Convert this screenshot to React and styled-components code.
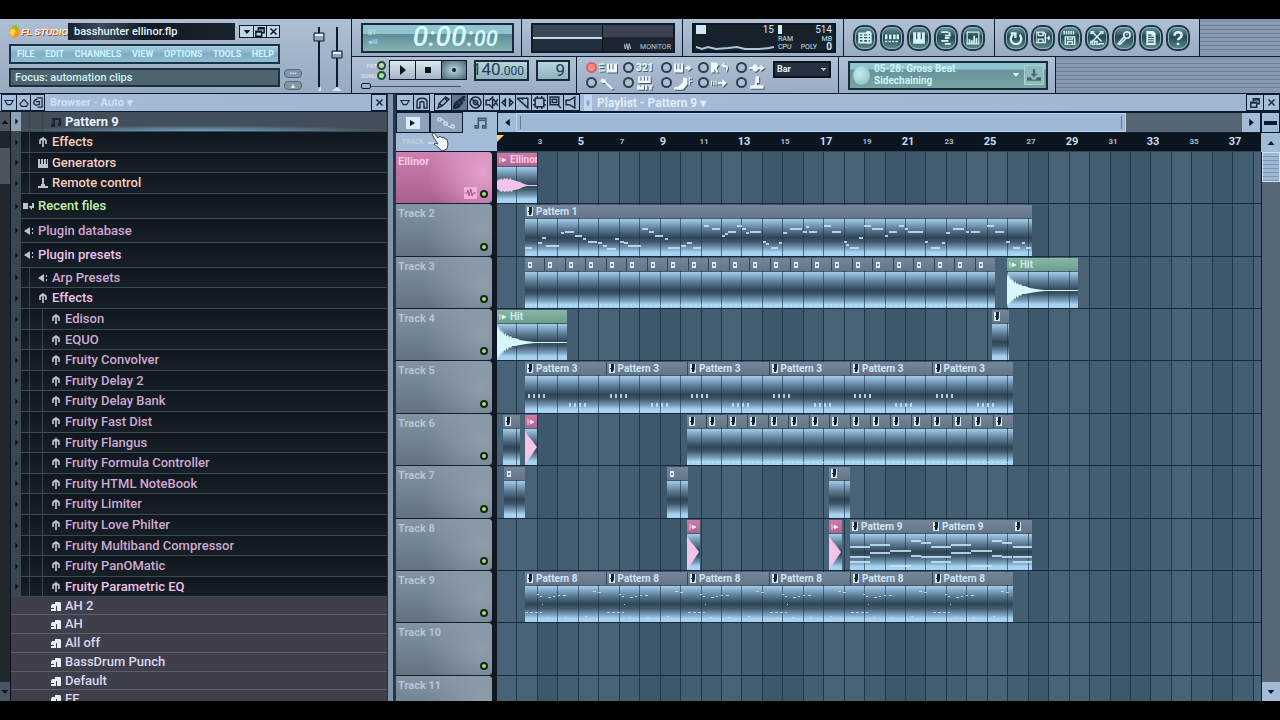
import React from "react";
import styled, { createGlobalStyle, css } from "styled-components";

const GlobalStyle = createGlobalStyle`
  * {
    box-sizing: border-box;
  }
  body {
    margin: 0;
    background: #000;
    font-family: Roboto, "Liberation Sans", sans-serif;
  }
  button, select, input {
    font-family: inherit;
    margin: 0;
    padding: 0;
    border-radius: 0;
  }
  svg {
    flex: none;
  }
`;

const line = "#0c1c30";
const steel = "#a3b5cb";

const StyledScreen = styled.div`
  height: 100vh;
  padding: 19px 0;
  background: #000;
`;
const StyledApp = styled.div`
  height: 100%;
  display: flex;
  flex-direction: column;
  overflow: hidden;
  background: #7d8ea4;
`;

/* ---------- header ---------- */
const StyledHeader = styled.header`
  display: flex;
  flex: none;
  height: 75px;
  border-bottom: 1px solid ${line};
  background: ${steel};
`;
const StyledTitlePanel = styled.div`
  display: flex;
  gap: 4px;
  width: 352px;
  padding: 4px 4px 2px 9px;
  border-right: 1px solid ${line};
  background: linear-gradient(#aebfd3, #97a9c0);
`;
const StyledTitleColumn = styled.div`
  display: flex;
  flex-direction: column;
  gap: 4px;
  width: 271px;
`;
const StyledTitleRow = styled.div`
  display: flex;
  align-items: center;
  height: 17px;
`;
const StyledLogo = styled.div`
  display: flex;
  align-items: center;
  width: 59px;
  height: 17px;
  color: #fff3dc;
  font: italic 700 9px "Liberation Sans", sans-serif;
  text-shadow: 1px 1px 0 #b04a14;
  white-space: nowrap;
`;
const StyledProject = styled.div`
  flex: 1;
  height: 17px;
  padding-left: 6px;
  background: linear-gradient(90deg, #17202b, #3e4b5a 20%, #111a24 45%, #1a232e);
  color: #e2f4fc;
  font-size: 11px;
  font-weight: 500;
  line-height: 17px;
  white-space: nowrap;
`;
const StyledWindowButtons = styled.div`
  display: flex;
  margin-left: 4px;
  border: 1px solid ${line};
`;
const StyledWindowButton = styled.button`
  display: flex;
  align-items: center;
  justify-content: center;
  width: 13px;
  height: 11px;
  border: 0;
  background: #c3d5e6;
  color: ${line};
  & + & {
    border-left: 1px solid ${line};
  }
`;
const StyledMenu = styled.nav`
  display: flex;
  align-items: center;
  justify-content: space-between;
  height: 20px;
  padding: 0 4px 0 6px;
  border: 2px solid #1b3347;
  background: linear-gradient(#a9d0e2, #7fadc6 50%, #8dbdd3);
`;
const StyledMenuItem = styled.button`
  border: 0;
  background: none;
  color: #d0f6fb;
  font-size: 9px;
  font-weight: 700;
  line-height: 16px;
`;
const StyledHint = styled.div`
  height: 19px;
  padding-left: 4px;
  border: 2px solid #1b2f3e;
  background: #4c646e;
  color: #d0eef4;
  font-size: 11px;
  font-weight: 500;
  line-height: 15px;
`;
const StyledKnobs = styled.div`
  display: flex;
  flex-direction: column;
  justify-content: flex-end;
  gap: 3px;
  width: 18px;
  padding-bottom: 1px;
`;
const StyledPill = styled.button`
  height: 9px;
  border: 1px solid #55677b;
  border-radius: 4px;
  background: #8496a9;
  color: #dcebf5;
  font-size: 7px;
  line-height: 6px;
`;
const StyledSliders = styled.div`
  flex: 1;
  display: flex;
  justify-content: center;
  padding-top: 2px;
`;

const StyledPanels = styled.div`
  flex: 1;
  min-width: 0;
`;
const StyledPanelRow = styled.div`
  display: flex;
  height: 37px;
  & + & {
    border-top: 1px solid ${line};
  }
`;
const StyledPanel = styled.div`
  display: flex;
  flex: none;
  align-items: center;
  width: ${({ $width }) => $width}px;
  padding: 0 7px 0 9px;
  border-right: 1px solid ${line};
  background: linear-gradient(#b0c1d5, #9aacc3);
`;
const StyledStripes = styled.div`
  flex: 1;
  border-top: 3px solid #8193aa;
  border-bottom: 3px solid #8496ad;
  background: repeating-linear-gradient(#8899b0 0 3px, #6b7c93 3px 4px);
`;
const StyledLcd = styled.div`
  display: flex;
  align-items: center;
  justify-content: ${({ $end }) => ($end ? "flex-end" : "space-between")};
  flex: ${({ $width }) => ($width ? "none" : 1)};
  width: ${({ $width }) => ($width ? $width + "px" : "auto")};
  height: ${({ $small }) => ($small ? "21px" : "30px")};
  padding: 0 ${({ $small }) => ($small ? "3px" : "14px")} 0 5px;
  border: 2px solid #172b3a;
  background: ${({ $small }) =>
    $small
      ? "linear-gradient(#b5d4de, #8fb2c0)"
      : "linear-gradient(#8fc3cd 0 35%, #5f8d95 36%, #86b4b4)"};
`;
const StyledClock = styled.div`
  color: #d8fbfd;
  font: italic 500 28px Roboto, sans-serif;
  line-height: 26px;
  small {
    font-size: 22px;
  }
`;
const StyledLcdHints = styled.div`
  display: grid;
  color: #b9e8ee;
  font-size: 7px;
  line-height: 9px;
`;
const StyledTempo = styled.div`
  color: #22404e;
  font-size: 17px;
  line-height: 17px;
  small {
    font-size: 12px;
  }
`;
const StyledMonitor = styled.div`
  flex: 1;
  display: grid;
  grid-template-columns: 1fr 1fr;
  height: 30px;
  border: 2px solid #101b27;
  background: #1f2a36;
`;
const StyledScope = styled.div`
  border-right: 1px solid #0a121b;
  background: linear-gradient(#3a4754 0 12px, #c3dbe8 12px 14px, #222e3b 14px);
`;
const StyledScopeLabel = styled.div`
  display: flex;
  align-items: flex-end;
  justify-content: flex-end;
  gap: 8px;
  padding-right: 2px;
  background: linear-gradient(#38434f 0 12px, #1c2530 12px);
  color: #b7ccd8;
  font-size: 7px;
  line-height: 8px;
`;
const StyledCpu = styled.div`
  flex: 1;
  display: grid;
  grid-template-columns: 82px 1fr;
  height: 30px;
  border: 2px solid #0d1720;
  background: #0d1720;
  color: #cfe6f2;
  font-size: 10px;
  line-height: 9px;
  overflow: hidden;
`;
const StyledCpuCell = styled.div`
  padding: 0 2px;
  background: #16212b;
`;
const StyledMeter = styled.div`
  display: flex;
  align-items: flex-start;
  justify-content: space-between;
  height: 10px;
  &::before {
    content: "";
    width: ${({ $width }) => $width}px;
    height: 9px;
    background: #d3e7f3;
  }
`;
const StyledMeterLabels = styled.div`
  display: flex;
  justify-content: space-between;
  font-size: 7px;
  line-height: 8px;
  b {
    font-size: 10px;
  }
`;
const StyledRoundButtons = styled.div`
  display: flex;
  gap: 3px;
`;
const StyledRoundButton = styled.button`
  display: flex;
  align-items: center;
  justify-content: center;
  width: 24px;
  height: 26px;
  border: 2px solid #1f3a44;
  border-radius: 10px;
  outline: 1px solid #8fb3bd;
  outline-offset: -3px;
  background: linear-gradient(#6d98a0, #264850 45%, #5b8a90);
  color: #d5f3f7;
`;
const StyledTransport = styled.div`
  display: grid;
  grid-template-columns: 25px 78px;
  grid-template-rows: 22px 10px;
  column-gap: 3px;
  align-items: center;
`;
const StyledLeds = styled.div`
  display: grid;
  gap: 1px;
  color: #dcecf5;
  font-size: 6px;
  line-height: 9px;
`;
const StyledLedRow = styled.div`
  display: flex;
  align-items: center;
  justify-content: flex-end;
  height: 9px;
`;
const StyledLed = styled.span`
  flex: none;
  width: 9px;
  height: 9px;
  border: 2px solid #2d4840;
  border-radius: 50%;
  background: ${({ $color }) => $color};
`;
const StyledPlayButtons = styled.div`
  display: grid;
  grid-template-columns: repeat(3, 1fr);
  height: 20px;
  border: 1px solid ${line};
`;
const StyledPlayButton = styled.button`
  display: flex;
  align-items: center;
  justify-content: center;
  border: 0;
  background: ${({ $pressed }) =>
    $pressed
      ? "radial-gradient(#b8dce2, #46616e)"
      : "linear-gradient(#dbe6ef, #a5b5c6)"};
  color: ${({ $pressed }) => ($pressed ? "#0f2028" : "#0a121c")};
  & + & {
    border-left: 1px solid ${line};
  }
`;
const StyledShuttle = styled.input`
  grid-column: 1 / -1;
  appearance: none;
  width: 100px;
  height: 9px;
  background: linear-gradient(transparent 4px, #41546a 4px 5px, transparent 5px);
  &::-webkit-slider-thumb {
    appearance: none;
    width: 10px;
    height: 6px;
    border: 1px solid ${line};
    border-radius: 2px;
    background: #9fb3c6;
  }
`;
const StyledCaptioned = styled.div`
  margin-left: 7px;
  padding-bottom: 10px;
`;
const StyledOptions = styled.div`
  display: grid;
  grid-template-columns: 37px 38px 37px 38px 30px;
  grid-template-rows: 15px 15px;
`;
const StyledOption = styled.label`
  display: flex;
  align-items: center;
  gap: 2px;
  color: #eef8fd;
  font-size: 10px;
  font-weight: 900;
  text-shadow: 1px 1px 0 #465a70;
  svg {
    filter: drop-shadow(1px 1px 0 #465a70);
  }
`;
const StyledCheck = styled.input`
  appearance: none;
  flex: none;
  width: 11px;
  height: 11px;
  border: 2px solid #2c4054;
  border-radius: 50%;
  background: #a9c0d2;
  &:checked {
    border-color: #d8646a;
    background: #ff8a84;
  }
`;
const StyledSnap = styled.select`
  appearance: none;
  width: 58px;
  height: 17px;
  padding: 0 2px;
  margin: 0 0 12px auto;
  border: 2px solid #0c141e;
  background: #26323f
    conic-gradient(from -45deg at 50% 100%, #a9bdcc 90deg, transparent 0) right 3px
    center / 6px 3px no-repeat;
  background-image: conic-gradient(from -45deg at 50% 100%, #a9bdcc 90deg, #26323f 0);
  color: #e6f3fa;
  font-size: 9px;
  font-weight: 700;
`;
const StyledNews = styled.div`
  flex: 1;
  display: flex;
  align-items: center;
  gap: 4px;
  height: 29px;
  padding-right: 2px;
  border: 2px solid #172b3a;
  background: linear-gradient(#8fc5cf 0 6px, #6a929c 7px, #76a5a0);
  color: #cdf4f6;
  font-size: 10px;
  font-weight: 700;
  line-height: 12px;
  overflow: hidden;
`;
const StyledNewsText = styled.div`
  flex: 1;
  white-space: nowrap;
`;
const StyledGlobe = styled.div`
  width: 17px;
  height: 19px;
  margin-left: 3px;
  border-radius: 50%;
  background: radial-gradient(circle at 40% 40%, #c4edf0, #86b8c0);
`;
const StyledDownload = styled.button`
  display: flex;
  align-items: center;
  justify-content: center;
  width: 20px;
  height: 20px;
  border: 1px solid #a6d4d4;
  background: #8fbcba;
  color: #47696e;
`;

/* ---------- browser ---------- */
const StyledMain = styled.div`
  flex: 1;
  min-height: 0;
  display: flex;
`;
const StyledBrowser = styled.aside`
  flex: none;
  display: flex;
  flex-direction: column;
  width: 388px;
  border-right: 1px solid #23303d;
`;
const StyledBar = styled.div`
  display: flex;
  flex: none;
  align-items: center;
  height: 18px;
  border-bottom: 1px solid ${line};
  background: linear-gradient(90deg, #a6bcd8, #9fb5d0);
`;
const StyledButtonGroup = styled.div`
  display: flex;
  margin-left: ${({ $gap = 0 }) => $gap}px;
  border: 1px solid ${line};
`;
const StyledToolButton = styled.button`
  display: flex;
  align-items: center;
  justify-content: center;
  width: ${({ $width = 14 }) => $width}px;
  height: 15px;
  border: 0;
  background: ${({ $active }) => ($active ? "#65778b" : "#a8bdd6")};
  color: #1b2c40;
  & + & {
    border-left: 1px solid ${line};
  }
`;
const StyledGrip = styled.span`
  width: 8px;
  height: 16px;
  margin-left: 4px;
  background: radial-gradient(#8aa3c0 1px, #c3d9ef 2px);
`;
const StyledBarTitle = styled.h2`
  flex: 1;
  margin: 0 0 0 5px;
  color: ${({ $large }) => ($large ? "#e0edfa" : "#cfe2f6")};
  font-size: ${({ $large }) => ($large ? "12px" : "11px")};
  font-weight: 700;
  line-height: 16px;
`;
const StyledBrowserBody = styled.div`
  flex: 1;
  min-height: 0;
  display: flex;
  background: #141c24;
`;
const StyledBrowserScroll = styled.div`
  display: flex;
  flex-direction: column;
  justify-content: space-between;
  width: 11px;
  border-right: 1px solid #0a1118;
  background: linear-gradient(#1d262d 36px, #4a5561 36px 72px, #22292e 72px);
`;
const StyledScrollArrow = styled.button`
  display: flex;
  align-items: center;
  justify-content: center;
  height: 19px;
  border: 0;
  background: ${({ $dark }) => ($dark ? "#4a5561" : "#a3bbd6")};
  color: #0b1520;
`;
const StyledList = styled.ul`
  flex: 1;
  margin: 0;
  padding: 0;
  list-style: none;
  overflow: hidden;
`;
const rowKinds = {
  leaf: css`
    height: 21px;
    &:nth-child(5n + 1),
    &:nth-child(5n + 3) {
      height: 20px;
    }
  `,
  folder: css`
    height: 24px;
    &:nth-child(odd) {
      height: 25px;
    }
  `,
  preset: css`
    height: 19px;
    background: #3f3f4c;
    &:nth-child(4n) {
      height: 18px;
    }
  `,
};
const StyledRow = styled.li`
  display: flex;
  align-items: stretch;
  border-bottom: 1px solid ${({ $kind }) => ($kind === "preset" ? "#5d5d6b" : "#3d4953")};
  background: ${({ $selected }) =>
    $selected
      ? "radial-gradient(ellipse 50% 30% at 50% 100%, #6fa5c8, transparent), #424e59"
      : "linear-gradient(#10171e, #161f27)"};
  ${({ $kind }) => rowKinds[$kind]}
`;
const StyledRowArrow = styled.span`
  display: flex;
  align-items: center;
  justify-content: center;
  width: 10px;
  margin-right: ${({ $indent }) => $indent}px;
  background: ${({ $bare, $selected }) =>
    $bare ? "none" : $selected ? "#8fa3b4" : "#3a4751"};
  color: #0a1118;
`;
const StyledRowLink = styled.a`
  display: flex;
  align-items: center;
  gap: 3px;
  color: ${({ $color }) => $color};
  font-size: 13px;
  font-weight: ${({ $strong }) => ($strong ? 700 : 500)};
  line-height: 18px;
  text-decoration: none;
  white-space: nowrap;
  svg {
    color: ${({ $strong }) => ($strong ? "#1b252e" : "#b9c4cc")};
  }
`;
const StyledGuide = styled.span`
  width: ${({ $width }) => $width}px;
  border-left: 1px solid #3f464b;
`;

/* ---------- playlist ---------- */
const StyledPlaylist = styled.section`
  flex: 1;
  min-width: 0;
  display: flex;
  flex-direction: column;
  margin-left: 5px;
  border-left: 3px solid #26384a;
  box-shadow: -5px 0 0 #8093a9;
`;
const StyledPlaylistBody = styled.div`
  flex: 1;
  min-height: 0;
  display: grid;
  grid-template-columns: 101px 1fr 19px;
  grid-template-rows: 21px 19px 1fr;
  background: #a3bbd6;
`;
const StyledTabs = styled.div`
  display: grid;
  grid-template-columns: repeat(3, 1fr);
  background: #a3bbd6;
`;
const StyledTab = styled.button`
  display: flex;
  align-items: center;
  justify-content: center;
  border: ${({ $active }) => ($active ? "0" : `1px solid ${line}`)};
  background: ${({ $active }) => ($active ? "#a3bbd6" : "#8ea1b9")};
  color: #e4f1fb;
`;
const StyledHScroll = styled.div`
  display: flex;
  border: 1px solid ${line};
  background: #566574;
`;
const StyledHArrow = styled.button`
  width: 18px;
  border: 0;
  background: #a3bbd6;
  color: #0b1520;
`;
const StyledHTrack = styled.div`
  flex: 1;
`;
const StyledHThumb = styled.div`
  width: 84%;
  height: 100%;
  padding: 2px 3px;
  border: 1px solid #bdd2e8;
  background: #9fb8d6;
  &::before {
    content: "";
    display: block;
    height: 100%;
    border: solid #617791;
    border-width: 0 1px;
  }
`;
const StyledZoom = styled.button`
  border: 1px solid ${line};
  background: #a3bbd6;
  &::before {
    content: "";
    display: block;
    height: 4px;
    margin: 0 2px;
    background: #0b1c2c;
  }
`;
const StyledTrackTools = styled.div`
  display: flex;
  gap: 4px;
  padding: 6px;
  border-bottom: 1px solid ${line};
  color: #c7dcea;
  font-size: 7px;
  line-height: 6px;
`;
const StyledRuler = styled.div`
  position: relative;
  border-bottom: 1px solid #31475a;
  background: #0b151f;
  overflow: hidden;
`;
const StyledBarNumber = styled.span`
  position: absolute;
  top: 1px;
  width: 26px;
  color: ${({ $small }) => ($small ? "#a9bdca" : "#c9dfee")};
  font-size: ${({ $small }) => ($small ? "8px" : "11px")};
  font-weight: 700;
  line-height: 16px;
  text-align: center;
`;
const StyledMarker = styled.span`
  position: absolute;
  top: 2px;
  left: 0;
  border: solid transparent;
  border-width: 7px 7px 0 0;
  border-top-color: #ffcf66;
`;
const StyledVScroll = styled.div`
  display: flex;
  flex-direction: column;
  border-left: 1px solid ${line};
  background: #586878;
`;
const StyledVThumb = styled.div`
  flex: none;
  height: 30px;
  border: 1px solid #cfe0f2;
  background: repeating-linear-gradient(#9db7d5 0 3px, #7d95b2 3px 4px);
`;
const StyledFill = styled.div`
  flex: 1;
`;

const rowHeight = css`
  flex: none;
  height: 52px;
  &:nth-child(5n + 2),
  &:nth-child(5n) {
    height: 53px;
  }
`;
const StyledTrackHeaders = styled.div`
  overflow: hidden;
  border-right: 5px solid #101923;
  background: #101923;
`;
const StyledTrackHeader = styled.div`
  ${rowHeight}
  display: flex;
  justify-content: space-between;
  padding: 2px 3px 4px 2px;
  border-bottom: 1px solid #15202c;
  border-radius: 0 4px 4px 0;
  background: ${({ $pink }) =>
    $pink
      ? "radial-gradient(circle at 90% 40%, #e3a0cd, transparent 60%), linear-gradient(#cf7fb0, #a8608f)"
      : "radial-gradient(circle at 90% 50%, #8f9dab, transparent 65%), linear-gradient(#8494a4, #63727e)"};
  color: ${({ $pink }) => ($pink ? "#f8c9e6" : "#b3c6d6")};
  font-size: 11px;
  font-weight: 700;
  line-height: 15px;
`;
const StyledTrackButtons = styled.div`
  display: flex;
  align-items: flex-end;
  gap: 3px;
`;
const StyledMute = styled.button`
  width: 8px;
  height: 8px;
  margin: 0 1px 1px 0;
  border: 2px solid #16241a;
  border-radius: 50%;
  background: #a8e070;
`;
const StyledWaveBadge = styled.span`
  display: flex;
  align-items: center;
  width: 13px;
  height: 12px;
  background: #f0b0d8;
`;
const StyledCanvas = styled.div`
  position: relative;
  overflow: hidden;
  background: #435c70;
`;
const StyledColumnBand = styled.div`
  position: absolute;
  top: 0;
  bottom: 0;
  border-right: 1px solid #20374b;
  background: ${({ $tone }) => ["#486376", "#435e71", "#3e586b"][$tone]};
`;
const StyledLane = styled.div`
  ${rowHeight}
  position: relative;
  border-bottom: 1px solid #152a3d;
`;
const StyledClip = styled.article`
  position: absolute;
  top: 1px;
  bottom: 0;
  display: flex;
  flex-direction: column;
  gap: 1px;
`;
const clipColors = {
  pattern: "linear-gradient(#76869a, #657487)",
  pink: "linear-gradient(#d079a8, #b0638e)",
  green: "linear-gradient(#86b8a4, #6b9f8c)",
};
const StyledClipTitles = styled.div`
  display: flex;
  height: 13px;
  background: ${({ $tone }) => clipColors[$tone]};
`;
const StyledClipTitle = styled.span`
  flex: 1;
  display: flex;
  align-items: center;
  gap: 3px;
  min-width: 0;
  padding-left: 2px;
  overflow: hidden;
  color: ${({ $tone }) => ($tone === "pink" ? "#ffc9e6" : "#cfe6f6")};
  font-size: 10px;
  font-weight: 700;
  line-height: 13px;
  white-space: nowrap;
  & + & {
    border-left: 1px solid #33465a;
  }
`;
const StyledClipBody = styled.div`
  position: relative;
  flex: 1;
  overflow: hidden;
  background: linear-gradient(
    #a4cce8,
    #7ea3c0 14%,
    #5b7a91 28%,
    #2f4557 50%,
    #3f596c 62%,
    #7ba1bd 80%,
    #a6d3f2 90%
  );
  svg {
    position: absolute;
    inset: 0;
  }
`;
const StyledCursor = styled.div`
  position: absolute;
  top: 132px;
  left: 430px;
`;

/* ---------- small drawings ---------- */
const Icon = ({ size = 12, children, fill = "none", view = 12 }) => (
  <svg
    width={size}
    height={size}
    viewBox={`0 0 ${view} ${view}`}
    fill={fill}
    stroke={fill === "none" ? "currentColor" : "none"}
    strokeWidth="1.4"
    aria-hidden="true"
  >
    {children}
  </svg>
);
const Solid = (props) => <Icon fill="currentColor" {...props} />;

const Fruit = () => (
  <svg width="12" height="17" viewBox="0 0 13 17" aria-hidden="true">
    <path d="M1 5C4 3 9 4 12 7c0 5-4 9-7 9C1 14 0 9 1 5z" fill="#ff9416" />
    <path d="M2 6c2-1 4 0 5 2-1 3-2 5-3 6C1 12 1 8 2 6z" fill="#ffd84a" />
    <path d="M4 5L3 1l3 2 2-3 1 4 3 0-3 2z" fill="#7cc63a" />
  </svg>
);
const Down = () => <Solid size={8}><path d="M1 3h10L6 9z" /></Solid>;
const Up = () => <Solid size={8}><path d="M1 9h10L6 3z" /></Solid>;
const Right = () => <Solid size={7}><path d="M4 1v10l5-5z" /></Solid>;
const Restore = () => (
  <Icon size={10}>
    <path d="M4 4V1h7v6H8M4 2h7M1 5h7v6H1zM1 6h7" strokeWidth="1.8" />
  </Icon>
);
const Close = () => (
  <Icon size={9}><path d="M2 2l8 8M10 2l-8 8" strokeWidth="2" /></Icon>
);

const roundIcons = {
  Playlist: (
    <>
      <path d="M1 2h10v8H1z" fill="none" />
      <path d="M1 4.500h10M1 7h10M4.500 2v8M8.500 0v11M7 1h4" />
    </>
  ),
  "Step sequencer": (
    <>
      <path d="M1 3v4M4.500 3v4M8 3v4M11 3v4" strokeWidth="2.200" />
      <path d="M0 9h12" strokeDasharray="2 1" />
    </>
  ),
  "Piano roll": (
    <path d="M1 1h2.500v6h1V1h3v6h1V1H11v10H1z" fill="currentColor" strokeWidth="0" />
  ),
  Browser: <path d="M2 1h6M5 4h5M5 6h4M2 8.500h6M5 11h5M9 1v3" strokeWidth="1.600" />,
  Mixer: (
    <>
      <path d="M1 11V1h10v10z" strokeWidth="1" />
      <path d="M3 11V7M5 11V8M7 11V4M9 11V6" strokeWidth="1.500" />
    </>
  ),
  Undo: <path d="M3.500 3A4.500 4.500 0 1 0 9 3.300M1.500 2h4v4" strokeWidth="2" />,
  "Save new": (
    <path d="M0 1h6.500L8 2.500V10H0zM2 1v3h4V1M2 10V7h4v3M9 6h4M11 4v4" strokeWidth="1.200" />
  ),
  "Render wave": (
    <path d="M1 0v3M3 0v3M5 0v3M7 0v3M9 0v3M2 5h8v7H2zM4 5v2h4V5M4 12V9h4v3" strokeWidth="1.200" />
  ),
  "Edit wave": (
    <path d="M3 2l7 7M9 2L2 9M1 0h2v2H1zM9 0h2v2H9zM0 12V9h2v3h2V9h2v3h2v-1h4" strokeWidth="1.300" />
  ),
  Record: (
    <>
      <circle cx="8.500" cy="3.500" r="2.700" />
      <path d="M6 5l-5 6 1.500.5L7.500 6.500M8 3h1" />
    </>
  ),
  "Project info": (
    <>
      <path d="M2 0h6l2 2v10H2z" fill="currentColor" strokeWidth="0" />
      <path d="M3.500 3.500h3M3.500 5.500h5M3.500 7.500h5M3.500 9.500h5" stroke="#2c4e56" strokeWidth="1" />
    </>
  ),
  Help: <path d="M3 4c0-4 7-4 6 0C9 6 6 6 6 8M6 10v2" strokeWidth="2.200" />,
};
const viewButtons = ["Playlist", "Step sequencer", "Piano roll", "Browser", "Mixer"];
const fileButtons = [
  "Undo",
  "Save new",
  "Render wave",
  "Edit wave",
  "Record",
  "Project info",
  "Help",
];

const optionIcons = [
  ["Typing keyboard", <path d="M0 2h5v1H0zM0 5h4v1H0zM0 8h5v1H0zM7 2h2v5h1V2h2v5h1V2h3v8H7z" />],
  ["Countdown", null],
  ["Blend notes", <path d="M0 2h2v5h1V2h2v5h1V2h2v8H0zM10 5h2V3l4 3-4 3V7h-2z" />],
  ["Loop record", <path d="M0 1h5l2 2-2 3 2 4H5L3 7v3H0zM9 3l3-2v2c4 0 4 4 1 7 1-4 0-5-1-5v2z" />],
  ["Multilink", <path d="M0 5h3c1-3 4-3 5 0h2V3l4 3-4 3V7H8c-1 3-4 3-5 0H0z" />],
  ["Metronome", <path d="M2 2l4 1 1 2 6 6-2 1-6-6H3L0 4l2 0z" />],
  ["Wait for input", <path d="M2 0h2v4h1V0h2v4h1V0h2v4h1V0h2v6H2zM1 8h2l1 2 1-2h2v4H1zM8 8h2v4H8zM11 8h4v1h-1v3h-2V9h-1z" />],
  ["Step edit", <path d="M0 10l4-1 4-4V1l4 1v5l-4 5H0zM13 1h3v1h-2v2h2v1h-2v3h-1z" />],
  ["Auto scroll", <path d="M0 4h1v4H0zM2 4h1v4H2zM4 4h1v4H4zM6 5h4V2l4 4-4 4V7H6z" />],
  ["Joystick", <path d="M6 0h3v6H7v2h6v3H1V8h4z" />],
];

const toolButtons = [
  ["Draw", <path d="M1 11l1-4 6-6 3 2-6 6zM2 7l3 2M7 2l3 3" />],
  ["Paint", <path d="M11 0L7 4l1 2-3 4-4 1 1-4 4-3zM3 7l3 2M8 2l3 2" strokeWidth="2.500" />],
  ["Delete", <path d="M6 1a5 5 0 1 0 .1 0zM6 4a2 2 0 1 0 .1 0zM3 3l6 6" />],
  ["Mute", <path d="M1 4h3l3-3v10L4 8H1zM8 3l4 6M12 3L8 9" />],
  ["Slip", <path d="M4 3L1 6l3 3zM8 3l3 3-3 3z" />],
  ["Slice", <path d="M0 2h10v9zM5 2v2" />],
  ["Select", <path d="M2 2h8v8H2zM0 4h2M0 8h2M10 4h2M10 8h2M4 0v2M8 0v2M4 10v2M8 10v2" />],
  ["Zoom", <path d="M1 1h8v7H1zM8 8l3 3M3 3h4v3H3z" />],
  ["Playback", <path d="M1 4h3l5-3v10L4 8H1z" />],
];

const rowIcons = {
  note: <path d="M2 2h9v8H8V7h1V4H5v7H1V8h2z" />,
  plug: (
    <path
      d="M6 2v9M3 8V5c0-3 6-3 6 0v3M4 4l2-2 2 2"
      fill="none"
      stroke="currentColor"
      strokeWidth="1.700"
    />
  ),
  speaker: <path d="M1 6l6-4v8zM9 3h1v2H9zM9 7h1v2H9z" />,
  preset: (
    <path d="M1 6l1-2h3V2h5l1 1v8H7V6H6v5H1V9h3V8H1z" fill="#e4eef4" />
  ),
  keys: <path d="M1 2h2v5h1V2h2v5h1V2h2v5h1V2h1v9H1z" />,
  stick: <path d="M5 1h2v6h1v2h3v2H1V9h3V7h1z" />,
  recent: <path d="M0 3h5v6H0zM6 6h3V3h2v5H9v2L6 7z" />,
};

const salmon = "#f8cdbb";
const plum = "#d3a3d8";
const pink = "#eec0ee";
const mauve = "#cfa9d2";
const lilac = "#dad6ee";

const browserRows = [
  ["Pattern 9", "note", "leaf", 2, "#e6f2fc"],
  ["Effects", "plug", "leaf", 1, salmon],
  ["Generators", "keys", "leaf", 1, salmon],
  ["Remote control", "stick", "leaf", 1, salmon],
  ["Recent files", "recent", "folder", 0, "#c2f2a8"],
  ["Plugin database", "speaker", "folder", 0, plum],
  ["Plugin presets", "speaker", "folder", 0, pink],
  ["Arp Presets", "speaker", "leaf", 1, mauve],
  ["Effects", "plug", "leaf", 1, pink],
  ...[
    "Edison",
    "EQUO",
    "Fruity Convolver",
    "Fruity Delay 2",
    "Fruity Delay Bank",
    "Fruity Fast Dist",
    "Fruity Flangus",
    "Fruity Formula Controller",
    "Fruity HTML NoteBook",
    "Fruity Limiter",
    "Fruity Love Philter",
    "Fruity Multiband Compressor",
    "Fruity PanOMatic",
  ].map((name) => [name, "plug", "leaf", 2, mauve]),
  ["Fruity Parametric EQ", "plug", "leaf", 2, pink],
  ...["AH 2", "AH", "All off", "BassDrum Punch", "Default", "EE"].map((name) => [
    name,
    "preset",
    "preset",
    2,
    lilac,
  ]),
];

/* ---------- song data: start and length in px of the song canvas ---------- */
const barX = (bar) => Math.round((bar * 409) / 20);
const times = (count, value) => Array.from({ length: count }, () => value);

// x, length, y
const melody = [
  [0, 7, 28], [13, 4, 23], [17, 4, 18], [21, 13, 26], [36, 3, 13], [40, 9, 12],
  [50, 7, 16], [58, 3, 19], [63, 9, 22], [73, 4, 23], [78, 4, 26], [82, 9, 29],
  [90, 4, 19], [95, 4, 22], [99, 4, 23], [103, 13, 26], [117, 6, 9], [124, 5, 12],
  [130, 8, 16], [140, 3, 19], [143, 12, 28], [156, 5, 26], [162, 5, 23],
  [168, 8, 28], [179, 5, 6], [187, 8, 9], [197, 3, 16], [200, 3, 14], [203, 8, 12],
  [212, 5, 6], [217, 4, 9], [221, 3, 13], [225, 11, 12], [238, 3, 22], [241, 3, 24],
  [246, 7, 28], [254, 3, 23], [258, 4, 13], [265, 12, 9], [278, 4, 12], [281, 3, 7],
  [284, 8, 12], [299, 7, 6], [307, 9, 12], [319, 3, 22], [321, 3, 25], [325, 9, 28],
  [334, 4, 18], [339, 7, 6], [347, 11, 9], [360, 3, 16], [364, 8, 12], [374, 5, 6],
  [380, 3, 9], [383, 15, 12], [400, 3, 22], [406, 9, 28], [417, 3, 23], [421, 4, 13],
  [428, 11, 9], [441, 3, 12], [446, 9, 12], [462, 7, 6], [470, 9, 12], [481, 4, 22],
  [488, 7, 28], [497, 3, 23], [501, 5, 28],
];
const every = (step, count, notes) =>
  times(count, 0).flatMap((_, i) =>
    notes.map(([x, w, y, h]) => [x + Math.round(i * step), w, y, h])
  );
const stabs = every(81.5, 6, [
  [3, 2, 18, 4], [8, 2, 18, 4], [13, 2, 18, 4], [18, 2, 18, 4],
  [44, 2, 27, 4], [49, 2, 27, 4], [54, 2, 27, 4], [59, 2, 27, 4],
]);
const sparkle = every(81.5, 6, [
  [0, 3, 26, 1], [5, 3, 26, 1], [10, 3, 26, 1], [15, 2, 26, 1], [12, 2, 8, 1],
  [15, 2, 10, 1], [17, 1, 18, 1], [23, 3, 11, 1], [28, 2, 10, 1], [33, 2, 9, 1],
  [38, 3, 9, 1], [68, 3, 5, 1], [73, 3, 6, 1], [22, 2, 31, 1], [40, 2, 31, 1],
  [60, 2, 30, 1],
]);
const chord = [[0, 20, 12], [0, 20, 22], [0, 20, 27]];
const chords = [
  ...chord,
  [20, 20, 10], [20, 20, 18], [40, 21, 16], [61, 10, 6], [61, 10, 21],
  [71, 10, 8], [71, 10, 22], [40, 21, 31],
];

const tracks = [
  { name: "Ellinor", pink: true, clips: [
    { x: 0, w: 40, tone: "pink", names: ["Ellinor"], shape: "voice" },
  ] },
  { name: "Track 2", clips: [{ x: 28, w: 507, names: ["Pattern 1"], notes: melody }] },
  { name: "Track 3", clips: [
    { x: 28, w: 470, names: times(23, ""), icon: "step", ticks: true },
    { x: 510, w: 71, tone: "green", names: ["Hit"], shape: "hit" },
  ] },
  { name: "Track 4", clips: [
    { x: 0, w: 70, tone: "green", names: ["Hit"], shape: "hit" },
    { x: 495, w: 17, names: [""] },
  ] },
  { name: "Track 5", clips: [{ x: 28, w: 488, names: times(6, "Pattern 3"), notes: stabs }] },
  { name: "Track 6", clips: [
    { x: 6, w: 17, names: [""] },
    { x: 28, w: 12, tone: "pink", names: [""], shape: "fade" },
    { x: 190, w: 326, names: times(16, ""), ticks: true },
  ] },
  { name: "Track 7", clips: [
    { x: 7, w: 21, names: [""], icon: "step" },
    { x: 170, w: 21, names: [""], icon: "step" },
    { x: 332, w: 21, names: [""] },
  ] },
  { name: "Track 8", clips: [
    { x: 190, w: 13, tone: "pink", names: [""], shape: "fade" },
    { x: 332, w: 13, tone: "pink", names: [""], shape: "fade" },
    { x: 353, w: 81, names: ["Pattern 9"], notes: chords },
    { x: 434, w: 82, names: ["Pattern 9"], notes: chords },
    { x: 516, w: 19, names: [""], notes: chord },
  ] },
  { name: "Track 9", clips: [{ x: 28, w: 488, names: times(6, "Pattern 8"), notes: sparkle }] },
  { name: "Track 10", clips: [] },
  { name: "Track 11", clips: [] },
];
const tones = [0, 0, 2, 1, 0, 0, 1, 2, 2, 1, 1, 0, 1, 2, 2, 1, 0, 0, 1, 2, 2, 1, 1, 0, 0, 1, 2, 0, 0, 1, 2, 2, 1, 0, 1, 2, 1, 0];

const shapes = {
  voice: "M0 14l2-2 1 1 1-2 2 2 1-2 2 1 1-1 2 2 1-2 2 2 2 0 2 1 4 1 4 2 4 1h10v1H30l-4 1-4 2-4 1-2 0-1 2-2-1-2 1-1-1-2 1-2-1-2 1-2-2-2-1z",
  hit: "M0 1l1 4 1-3 1 6 1-3 1 4 1-2 1 4 2-2 0 3 2-1 1 2 2-1 1 2 3 0 5 2 6 1 8 1h34v1H38l-9 1-6 1-5 1-3 0-1 2-2-1-1 3-2-2 0 3-2-1-1 4-1-3-1 5-1-3-1 5-1-3-1 5z",
  fade: "M0 2l4 6 2 2 6 8-6 9-2 3-4 6z",
};

const ClipIcon = ({ tone, icon }) => {
  if (tone !== "pattern") {
    return (
      <svg width="8" height="8" viewBox="0 0 8 8" aria-hidden="true">
        <path
          d="M1 1v6M2 4h5M3 2l4 2-4 2"
          fill="#fff"
          stroke={tone === "pink" ? "#ffd3ea" : "#d5f5e6"}
        />
      </svg>
    );
  }
  return icon === "step" ? (
    <svg width="6" height="8" viewBox="0 0 6 8" aria-hidden="true">
      <path d="M1 1h4v6H1z" fill="#dceaf5" />
      <path d="M2 3h2v2H2z" fill="#6d7f92" />
    </svg>
  ) : (
    <svg width="6" height="9" viewBox="0 0 6 9" aria-hidden="true">
      <path d="M0 0h6v9H0z" fill="#d5e8f6" />
      <path d="M1 0h4v5l-1 3H2V5H1z" fill="#13202e" />
      <path d="M1 0h1v4H1z" fill="#d5e8f6" />
    </svg>
  );
};

const Clip = ({ x, w, tone = "pattern", names, icon, notes = [], shape, ticks }) => (
  <StyledClip style={{ left: x, width: w }}>
    <StyledClipTitles $tone={tone}>
      {names.map((name, i) => (
        <StyledClipTitle key={i} $tone={tone}>
          <ClipIcon tone={tone} icon={icon} />
          {name}
        </StyledClipTitle>
      ))}
    </StyledClipTitles>
    <StyledClipBody>
      <svg width={w} height="37" aria-hidden="true">
        {tones.map((_, i) => (
          <path key={i} d={`M${barX(i) - x - 1}.5 0v37`} stroke="#1c3348" opacity="0.6" />
        ))}
        {ticks && (
          <path d={`M0 33.500h${w}`} stroke="#d8effc" strokeDasharray="2 3" opacity="0.6" />
        )}
        {notes.map(([nx, nw, ny, nh = 2], i) => (
          <rect key={i} x={nx} y={ny} width={nw} height={nh} fill="#c4e4f6" opacity="0.85" />
        ))}
        {shape && <path d={shapes[shape]} fill={tone === "pink" ? "#f2c4ea" : "#d9f6fb"} />}
      </svg>
    </StyledClipBody>
  </StyledClip>
);

const RoundButtons = ({ names }) => (
  <StyledRoundButtons>
    {names.map((name) => (
      <StyledRoundButton key={name} aria-label={name}>
        <Icon size={14}>{roundIcons[name]}</Icon>
      </StyledRoundButton>
    ))}
  </StyledRoundButtons>
);

const Header = () => (
  <StyledHeader>
    <StyledTitlePanel>
      <StyledTitleColumn>
        <StyledTitleRow>
          <StyledLogo>
            <Fruit />
            FL STUDIO
          </StyledLogo>
          <StyledProject>basshunter ellinor.flp</StyledProject>
          <StyledWindowButtons>
            <StyledWindowButton aria-label="Minimize"><Down /></StyledWindowButton>
            <StyledWindowButton aria-label="Restore"><Restore /></StyledWindowButton>
            <StyledWindowButton aria-label="Close"><Close /></StyledWindowButton>
          </StyledWindowButtons>
        </StyledTitleRow>
        <StyledMenu>
          {["FILE", "EDIT", "CHANNELS", "VIEW", "OPTIONS", "TOOLS", "HELP"].map((item) => (
            <StyledMenuItem key={item}>{item}</StyledMenuItem>
          ))}
        </StyledMenu>
        <StyledHint>Focus: automation clips</StyledHint>
      </StyledTitleColumn>
      <StyledKnobs>
        <StyledPill aria-label="Hint options">•••</StyledPill>
        <StyledPill aria-label="Collapse">▲</StyledPill>
      </StyledKnobs>
      <StyledSliders>
        <svg width="32" height="66" viewBox="0 0 32 66" aria-hidden="true">
          <path d="M8 2v60M26 2v60" stroke={line} strokeWidth="2" />
          <path d="M3 8h10v8H3zM21 26h10v7H21z" fill="#8fa3b5" stroke={line} />
          <path d="M4 10h8M22 28h8" stroke="#e6f2fa" strokeWidth="2" />
          <path d="M7 66l3-5v5zM21 66l5-4 5 4z" fill="#d8e5f0" />
        </svg>
      </StyledSliders>
    </StyledTitlePanel>
    <StyledPanels>
      <StyledPanelRow>
        <StyledPanel $width={170}>
          <StyledLcd>
            <StyledLcdHints>
              <span>BT</span>
              <span>◂III</span>
            </StyledLcdHints>
            <StyledClock>
              0:00:<small>00</small>
            </StyledClock>
          </StyledLcd>
        </StyledPanel>
        <StyledPanel $width={161}>
          <StyledMonitor>
            <StyledScope />
            <StyledScopeLabel>
              <Icon size={8}><path d="M0 1l2 8 2-8 2 9 2-9 2 8" /></Icon>
              MONITOR
            </StyledScopeLabel>
          </StyledMonitor>
        </StyledPanel>
        <StyledPanel $width={161}>
          <StyledCpu>
            <StyledCpuCell>
              <StyledMeter $width={10}>15</StyledMeter>
              <svg width="78" height="16" aria-hidden="true">
                <path d="M0 12l6 2 6-2 8 2 12-1 9-1 8 2h14l10-1 5-1" fill="none" stroke="#a9c8d8" strokeWidth="2" />
              </svg>
            </StyledCpuCell>
            <StyledCpuCell>
              <StyledMeter $width={4}>514</StyledMeter>
              <StyledMeterLabels><span>RAM</span><span>MB</span></StyledMeterLabels>
              <StyledMeterLabels><span>CPU</span><span>POLY</span><b>0</b></StyledMeterLabels>
            </StyledCpuCell>
          </StyledCpu>
        </StyledPanel>
        <StyledPanel $width={151}><RoundButtons names={viewButtons} /></StyledPanel>
        <StyledPanel $width={205}><RoundButtons names={fileButtons} /></StyledPanel>
        <StyledStripes />
      </StyledPanelRow>
      <StyledPanelRow>
        <StyledPanel $width={225}>
          <StyledTransport>
            <StyledLeds>
              <StyledLedRow>PAT<StyledLed $color="#c8d89c" /></StyledLedRow>
              <StyledLedRow>SONG<StyledLed $color="#8ef08c" /></StyledLedRow>
            </StyledLeds>
            <StyledPlayButtons>
              <StyledPlayButton aria-label="Play">
                <Solid size={12}><path d="M3 1v10l6-5z" /></Solid>
              </StyledPlayButton>
              <StyledPlayButton aria-label="Stop">
                <Solid size={12}><path d="M3 3h6v6H3z" /></Solid>
              </StyledPlayButton>
              <StyledPlayButton aria-label="Record" $pressed>
                <Solid size={12}><circle cx="6" cy="6" r="2" /></Solid>
              </StyledPlayButton>
            </StyledPlayButtons>
            <StyledShuttle type="range" defaultValue="0" aria-label="Song position" />
          </StyledTransport>
          <StyledCaptioned>
            <StyledLcd $small $width={55} $end>
              <StyledTempo>140<small>.000</small></StyledTempo>
            </StyledLcd>
          </StyledCaptioned>
          <StyledCaptioned>
            <StyledLcd $small $width={34} $end><StyledTempo>9</StyledTempo></StyledLcd>
          </StyledCaptioned>
        </StyledPanel>
        <StyledPanel $width={262}>
          <StyledOptions>
            {optionIcons.map(([name, drawing], i) => (
              <StyledOption key={name}>
                <StyledCheck type="checkbox" defaultChecked={i === 0} aria-label={name} />
                {drawing ? (
                  <svg width="18" height="14" viewBox="0 0 16 12" fill="currentColor" aria-hidden="true">
                    {drawing}
                  </svg>
                ) : (
                  "321"
                )}
              </StyledOption>
            ))}
          </StyledOptions>
          <StyledSnap aria-label="Snap" defaultValue="Bar">
            <option>Bar</option>
          </StyledSnap>
        </StyledPanel>
        <StyledPanel $width={217}>
          <StyledNews>
            <StyledGlobe />
            <StyledNewsText>
              05-28: Gross Beat
              <br />
              Sidechaining
            </StyledNewsText>
            <Down />
            <StyledDownload aria-label="Download">
              <Solid size={14}><path d="M5 1h2v4h2L6 8 3 5h2zM0 8h3l2 2h2l2-2h3v3H0z" /></Solid>
            </StyledDownload>
          </StyledNews>
        </StyledPanel>
        <StyledStripes />
      </StyledPanelRow>
    </StyledPanels>
  </StyledHeader>
);

const Browser = () => (
  <StyledBrowser>
    <StyledBar>
      <StyledButtonGroup $gap={1}>
        <StyledToolButton aria-label="Browser menu"><Icon size={10}><path d="M1 3h10L8 8H4z" /></Icon></StyledToolButton>
        <StyledToolButton aria-label="Collapse all"><Icon size={10}><path d="M1 7l5-5 5 5-2 3H3z" /></Icon></StyledToolButton>
        <StyledToolButton aria-label="Refresh"><Icon size={11}><path d="M5 1h6v10H6M6 3a3 3 0 1 0 1 5M4 5h4v4" /></Icon></StyledToolButton>
      </StyledButtonGroup>
      <StyledBarTitle>Browser - Auto ▾</StyledBarTitle>
      <StyledButtonGroup>
        <StyledToolButton aria-label="Close browser"><Close /></StyledToolButton>
      </StyledButtonGroup>
    </StyledBar>
    <StyledBrowserBody>
      <StyledBrowserScroll>
        <StyledScrollArrow $dark aria-label="Scroll up"><Up /></StyledScrollArrow>
        <StyledScrollArrow $dark aria-label="Scroll down"><Down /></StyledScrollArrow>
      </StyledBrowserScroll>
      <StyledList>
        {browserRows.map(([name, icon, kind, depth, color], i) => (
          <StyledRow key={i} $kind={kind} $selected={i === 0}>
            <StyledRowArrow $indent={depth ? 8 : 2} $bare={kind === "preset"} $selected={i === 0}>
              {kind !== "preset" && <Right />}
            </StyledRowArrow>
            {depth > 0 && kind !== "preset" && <StyledGuide $width={depth > 1 ? 13 : 8} />}
            {depth > 1 && kind !== "preset" && <StyledGuide $width={8} />}
            {kind === "preset" && <StyledRowArrow $bare $indent={11} />}
            <StyledRowLink href="#" $color={color} $strong={i === 0}>
              <Solid size={12}>{rowIcons[icon]}</Solid>
              {name}
            </StyledRowLink>
          </StyledRow>
        ))}
      </StyledList>
    </StyledBrowserBody>
  </StyledBrowser>
);

const Playlist = () => (
  <StyledPlaylist>
    <StyledBar>
      <StyledButtonGroup>
        <StyledToolButton $width={16} aria-label="Playlist menu"><Icon size={10}><path d="M1 3h10L8 8H4z" /></Icon></StyledToolButton>
        <StyledToolButton $width={16} aria-label="Snap"><Icon size={12}><path d="M1 11V5c0-5 10-5 10 0v6H8V6c0-2-4-2-4 0v5z" /></Icon></StyledToolButton>
      </StyledButtonGroup>
      <StyledButtonGroup $gap={4}>
        {toolButtons.map(([name, drawing], i) => (
          <StyledToolButton key={name} $width={16} $active={i === 1} aria-label={name}>
            <Icon size={13}>{drawing}</Icon>
          </StyledToolButton>
        ))}
      </StyledButtonGroup>
      <StyledGrip />
      <StyledBarTitle $large>Playlist - Pattern 9 ▾</StyledBarTitle>
      <StyledButtonGroup>
        <StyledToolButton $width={16} aria-label="Restore playlist"><Restore /></StyledToolButton>
        <StyledToolButton $width={16} aria-label="Close playlist"><Close /></StyledToolButton>
      </StyledButtonGroup>
    </StyledBar>
    <StyledPlaylistBody>
      <StyledTabs>
        <StyledTab aria-label="Clips">
          <svg width="14" height="12" aria-hidden="true">
            <path d="M0 0h14v12H0z" fill="#dcebf8" />
            <path d="M4 3v6l5-3z" fill={line} />
          </svg>
        </StyledTab>
        <StyledTab aria-label="Automation">
          <svg width="18" height="12" viewBox="0 0 18 12" fill="none" stroke="currentColor" aria-hidden="true">
            <path d="M1 1h3v3H1zM14 8h3v3h-3zM7 5h3v3H7zM4 2c3 0 2 1 4 3M10 7c1 3 2 3 4 3" />
          </svg>
        </StyledTab>
        <StyledTab $active aria-label="Notes">
          <Icon size={13}><path d="M4 9V2h7v7M4 4h7M1 9h3v2H1zM8 9h3v2H8z" stroke="#40566e" /></Icon>
        </StyledTab>
      </StyledTabs>
      <StyledHScroll>
        <StyledHArrow aria-label="Scroll left"><Solid size={9}><path d="M9 1v10L3 6z" /></Solid></StyledHArrow>
        <StyledHTrack><StyledHThumb /></StyledHTrack>
        <StyledHArrow aria-label="Scroll right"><Solid size={9}><path d="M3 1v10l6-5z" /></Solid></StyledHArrow>
      </StyledHScroll>
      <StyledZoom aria-label="Zoom out" />
      <StyledTrackTools>
        <span>TRACK</span>
        <span>▬▬</span>
      </StyledTrackTools>
      <StyledRuler>
        <StyledMarker />
        {times(18, 0).map((_, i) => (
          <StyledBarNumber key={i} $small={i % 2 === 0} style={{ left: barX(i * 2 + 2) - 11 }}>
            {i * 2 + 3}
          </StyledBarNumber>
        ))}
      </StyledRuler>
      <StyledScrollArrow aria-label="Scroll tracks up"><Up /></StyledScrollArrow>
      <StyledTrackHeaders>
        {tracks.map((track) => (
          <StyledTrackHeader key={track.name} $pink={track.pink}>
            {track.name}
            <StyledTrackButtons>
              {track.pink && (
                <StyledWaveBadge>
                  <svg width="13" height="12" aria-hidden="true">
                    <path d="M1 6h2l1-3 1 6 2-7 1 7 1-3h3" fill="none" stroke="#b04f8c" />
                  </svg>
                </StyledWaveBadge>
              )}
              <StyledMute aria-label={`Mute ${track.name}`} />
            </StyledTrackButtons>
          </StyledTrackHeader>
        ))}
      </StyledTrackHeaders>
      <StyledCanvas>
        {/* an even wrapper keeps the lanes' nth-child heights in step with the headers */}
        <div>
          {tones.map((tone, i) => (
            <StyledColumnBand
              key={i}
              $tone={tone}
              style={{ left: barX(i), width: barX(i + 1) - barX(i) }}
            />
          ))}
        </div>
        <div>
          {tracks.map((track) => (
            <StyledLane key={track.name}>
              {track.clips.map((clip) => (
                <Clip key={clip.x} {...clip} />
              ))}
            </StyledLane>
          ))}
        </div>
      </StyledCanvas>
      <StyledVScroll>
        <StyledVThumb />
        <StyledFill />
        <StyledScrollArrow aria-label="Scroll tracks down"><Down /></StyledScrollArrow>
      </StyledVScroll>
    </StyledPlaylistBody>
  </StyledPlaylist>
);

const App = () => (
  <StyledScreen>
    <GlobalStyle />
    <StyledApp>
      <Header />
      <StyledMain>
        <Browser />
        <Playlist />
      </StyledMain>
    </StyledApp>
    <StyledCursor>
      <svg width="20" height="20" viewBox="0 0 20 20" aria-hidden="true">
        <path
          d="M2 2c1-1 2-1 3 0l3 4 2-2 2 2 2-1 1 2 2 0 1 5-1 5-5 2-3-3-5-4 1-1 3 1-4-6z"
          fill="#f4f8fc"
          stroke="#3c4c5e"
        />
      </svg>
    </StyledCursor>
  </StyledScreen>
);

export default App;
